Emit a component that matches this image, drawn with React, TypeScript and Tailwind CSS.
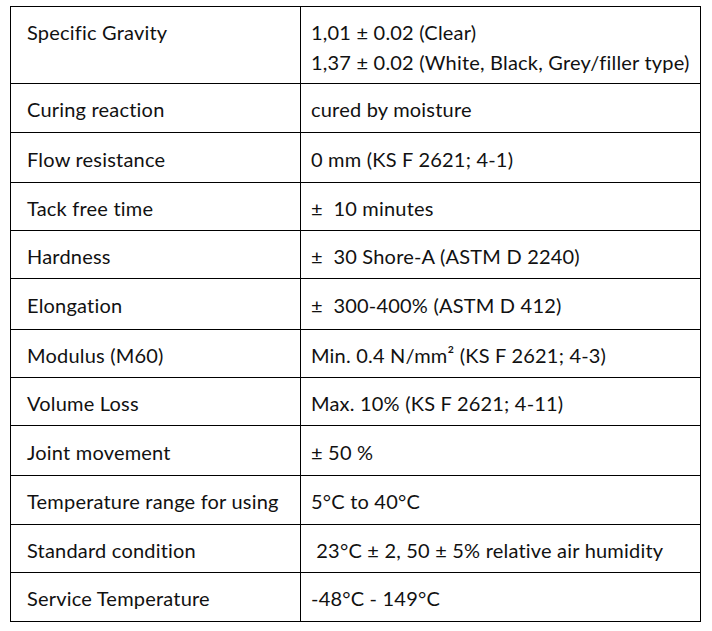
import React from "react";

const rows: { label: string; value: string[]; h: string }[] = [
  { label: "Specific Gravity", value: ["1,01 ± 0.02 (Clear)", "1,37 ± 0.02 (White, Black, Grey/filler type)"], h: "h-[76px]" },
  { label: "Curing reaction", value: ["cured by moisture"], h: "h-[49px]" },
  { label: "Flow resistance", value: ["0 mm (KS F 2621; 4-1)"], h: "h-[50px]" },
  { label: "Tack free time", value: ["±  10 minutes"], h: "h-[48px]" },
  { label: "Hardness", value: ["±  30 Shore-A (ASTM D 2240)"], h: "h-[48px]" },
  { label: "Elongation", value: ["±  300-400% (ASTM D 412)"], h: "h-[51px]" },
  { label: "Modulus (M60)", value: ["Min. 0.4 N/mm² (KS F 2621; 4-3)"], h: "h-[48px]" },
  { label: "Volume Loss", value: ["Max. 10% (KS F 2621; 4-11)"], h: "h-[48px]" },
  { label: "Joint movement", value: ["± 50 %"], h: "h-[50px]" },
  { label: "Temperature range for using", value: ["5°C to 40°C"], h: "h-[49px]" },
  { label: "Standard condition", value: [" 23°C ± 2, 50 ± 5% relative air humidity"], h: "h-[48px]" },
  { label: "Service Temperature", value: ["-48°C - 149°C"], h: "h-[49px]" },
];

export default function App() {
  return (
    <div className="w-[712px] h-[631px] bg-white pt-[6px] pl-[10px]" style={{ fontFamily: "Lato, 'Noto Sans', sans-serif" }}>
      <div className="w-[691px] border border-black text-[20px] tracking-[0.2px] text-[#111]">
        {rows.map((r, i) => {
          const multi = r.value.length > 1;
          return (
            <div key={i} className={`flex ${r.h} ${i > 0 ? "border-t border-black" : ""}`}>
              <div className={`w-[290px] shrink-0 border-r border-black pl-[16px] flex ${multi ? "items-start pt-[10px]" : "items-center pt-[2px]"}`}>
                <span className="leading-[30px]">{r.label}</span>
              </div>
              <div className={`flex-1 pl-[10px] flex flex-col ${multi ? "justify-start pt-[10px]" : "justify-center pt-[2px]"}`}>
                {r.value.map((v, j) => (
                  <span key={j} className="leading-[30px] whitespace-pre">{v}</span>
                ))}
              </div>
            </div>
          );
        })}
      </div>
    </div>
  );
}
